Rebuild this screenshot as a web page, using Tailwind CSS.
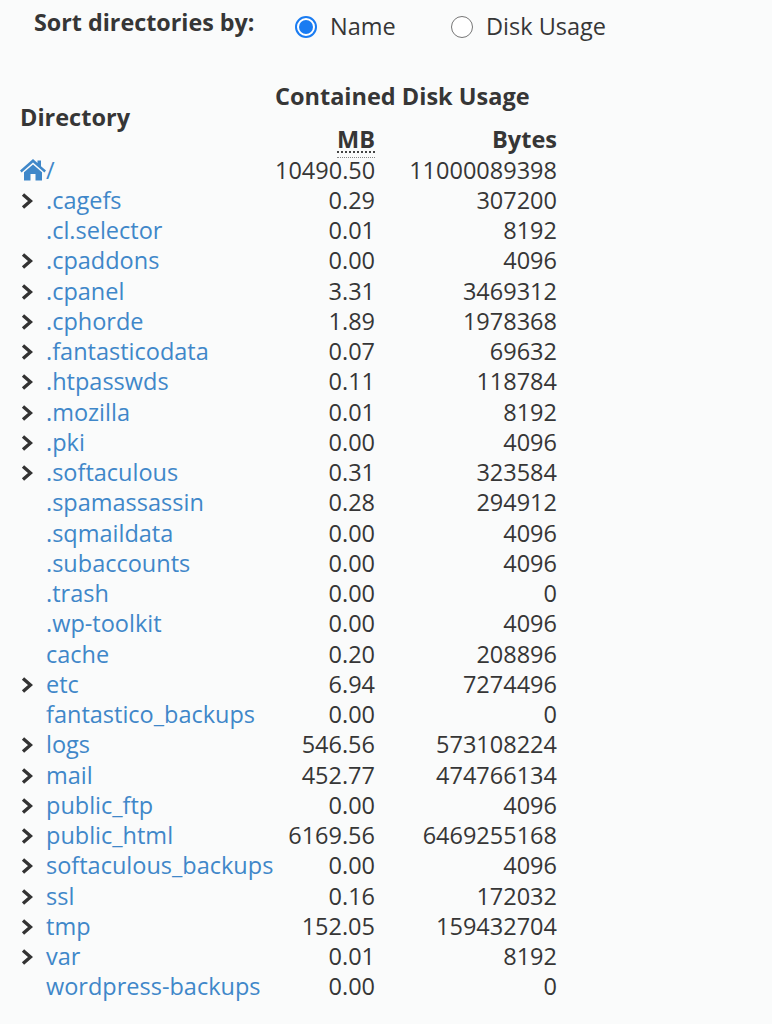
<!DOCTYPE html>
<html lang="en">
<head>
  <meta charset="UTF-8">
  <title>Disk Usage</title>
  <script src="https://cdn.jsdelivr.net/npm/@tailwindcss/browser@4"></script>
</head>
<body class="bg-[#fafbfb] text-[#363636] font-['Open_Sans',sans-serif] text-[23.5px] h-[1024px] overflow-hidden">
  <div class="flex items-start h-[40px] pt-[8px]">
    <div class="font-bold text-[23.3px] leading-[30px] ml-[34px] -mt-[1px] w-[261px]">Sort directories by:</div>
    <label class="flex items-center h-[38px]">
      <span class="w-[22px] h-[22px] rounded-full border-2 border-[#1a7cf2] bg-white flex items-center justify-center"><span class="w-[14px] h-[14px] rounded-full bg-[#1a7cf2]"></span></span>
      <span class="ml-[13px] w-[121px]">Name</span>
    </label>
    <label class="flex items-center h-[38px]">
      <span class="w-[22px] h-[22px] rounded-full border border-[#767676] bg-white"></span>
      <span class="ml-[13px]">Disk Usage</span>
    </label>
  </div>

  <div class="ml-[20px] mt-[36px] w-[537px]">
    <div class="flex font-bold h-[78.7px]">
      <div class="w-[255px] pt-[26px] leading-[30px]">Directory</div>
      <div class="flex-1">
        <div class="leading-[40px]">Contained Disk Usage</div>
        <div class="flex mt-[8px]">
          <div class="w-[100px] text-right leading-[30px]"><span class="inline-block h-[34px] border-b border-dotted border-[#888888]"><span class="block h-[29px] border-b-[2px] border-dotted border-[#444444]">MB</span></span></div>
          <div class="flex-1 text-right leading-[30px]">Bytes</div>
        </div>
      </div>
    </div>
    <div id="filas"></div>
  </div>

  <script>
    const filas = [
      [true, ".cagefs", "0.29", "307200"],
      [false, ".cl.selector", "0.01", "8192"],
      [true, ".cpaddons", "0.00", "4096"],
      [true, ".cpanel", "3.31", "3469312"],
      [true, ".cphorde", "1.89", "1978368"],
      [true, ".fantasticodata", "0.07", "69632"],
      [true, ".htpasswds", "0.11", "118784"],
      [true, ".mozilla", "0.01", "8192"],
      [true, ".pki", "0.00", "4096"],
      [true, ".softaculous", "0.31", "323584"],
      [false, ".spamassassin", "0.28", "294912"],
      [false, ".sqmaildata", "0.00", "4096"],
      [false, ".subaccounts", "0.00", "4096"],
      [false, ".trash", "0.00", "0"],
      [false, ".wp-toolkit", "0.00", "4096"],
      [false, "cache", "0.20", "208896"],
      [true, "etc", "6.94", "7274496"],
      [false, "fantastico_backups", "0.00", "0"],
      [true, "logs", "546.56", "573108224"],
      [true, "mail", "452.77", "474766134"],
      [true, "public_ftp", "0.00", "4096"],
      [true, "public_html", "6169.56", "6469255168"],
      [true, "softaculous_backups", "0.00", "4096"],
      [true, "ssl", "0.16", "172032"],
      [true, "tmp", "152.05", "159432704"],
      [true, "var", "0.01", "8192"],
      [false, "wordpress-backups", "0.00", "0"]
    ];
    const flecha = `<svg viewBox="0 0 12 16" class="w-[12px] h-[16px] absolute left-[0.5px] top-[8px]"><path d="M2 1.5 L9.5 8 L2 14.5" fill="none" stroke="#333333" stroke-width="3.4"/></svg>`;
    let html = `
      <div class="flex h-[30.26px] leading-[30px] relative">
        <div class="w-[255px] flex items-center text-[#3f87c9]">
          <svg viewBox="0 0 26 22" class="w-[26px] h-[22px]"><path fill="#3f87c9" d="M13 0 L17.5 4 V1.5 H21 V7.2 L26 11.6 L24.4 13.4 L13 3.4 L1.6 13.4 L0 11.6 Z M13 5.4 L22 13.2 V21.5 H15.5 V15 H10.5 V21.5 H4 V13.2 Z"/></svg><span>/</span>
        </div>
        <div class="w-[100px] text-right">10490.50</div>
        <div class="flex-1 text-right">11000089398</div>
      </div>`;
    filas.forEach((fila) => {
      html += `
      <div class="flex h-[30.26px] leading-[30px] relative">
        ${fila[0] ? flecha : ""}
        <div class="w-[255px] pl-[26px] whitespace-nowrap text-[#3f87c9]">${fila[1]}</div>
        <div class="w-[100px] text-right">${fila[2]}</div>
        <div class="flex-1 text-right">${fila[3]}</div>
      </div>`;
    });
    document.getElementById("filas").innerHTML = html;
  </script>
</body>
</html>
